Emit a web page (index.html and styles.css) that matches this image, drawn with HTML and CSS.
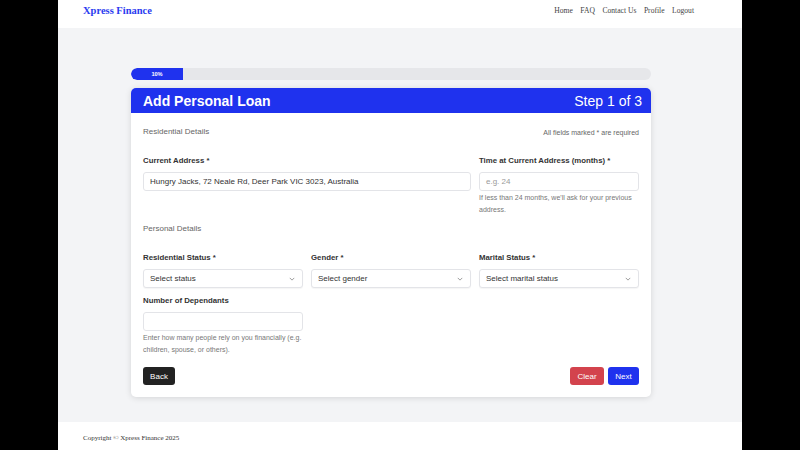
FILE: index.html
```html
<!DOCTYPE html>
<html lang="en">
<head>
<meta charset="utf-8">
<title>Add Personal Loan - Xpress Finance</title>
<link rel="stylesheet" href="styles.css">
</head>
<body>
<div class="page">
  <header class="topbar">
    <a class="brand" href="#">Xpress Finance</a>
    <nav class="nav">
      <a href="#">Home</a>
      <a href="#">FAQ</a>
      <a href="#">Contact Us</a>
      <a href="#">Profile</a>
      <a href="#">Logout</a>
    </nav>
  </header>

  <main class="main">
    <div class="wrap">
      <div class="progress"><div class="progress-fill" style="width:10%">10%</div></div>

      <section class="card">
        <div class="card-head">
          <h1>Add Personal Loan</h1>
          <span class="step">Step 1 of 3</span>
        </div>
        <div class="card-body">
          <div class="section-row">
            <span class="section-title">Residential Details</span>
            <span class="required-note">All fields marked * are required</span>
          </div>

          <div class="grid grid-first">
            <div class="field span2">
              <label>Current Address *</label>
              <div class="input">Hungry Jacks, 72 Neale Rd, Deer Park VIC 3023, Australia</div>
            </div>
            <div class="field">
              <label>Time at Current Address (months) *</label>
              <div class="input placeholder">e.g. 24</div>
              <p class="help">If less than 24 months, we'll ask for your previous address.</p>
            </div>
          </div>

          <div class="section-title section-second">Personal Details</div>

          <div class="grid grid-second">
            <div class="field">
              <label>Residential Status *</label>
              <div class="input select"><span>Select status</span><svg class="chev" viewBox="0 0 8 5" width="6" height="4"><path d="M1 1l3 3 3-3" fill="none" stroke="#888" stroke-width="1.1"/></svg></div>
            </div>
            <div class="field">
              <label>Gender *</label>
              <div class="input select"><span>Select gender</span><svg class="chev" viewBox="0 0 8 5" width="6" height="4"><path d="M1 1l3 3 3-3" fill="none" stroke="#888" stroke-width="1.1"/></svg></div>
            </div>
            <div class="field">
              <label>Marital Status *</label>
              <div class="input select"><span>Select marital status</span><svg class="chev" viewBox="0 0 8 5" width="6" height="4"><path d="M1 1l3 3 3-3" fill="none" stroke="#888" stroke-width="1.1"/></svg></div>
            </div>
            <div class="field">
              <label>Number of Dependants</label>
              <div class="input"></div>
              <p class="help help-tight">Enter how many people rely on you financially (e.g. children, spouse, or others).</p>
            </div>
          </div>

          <div class="actions">
            <button class="btn btn-dark">Back</button>
            <div class="actions-right">
              <button class="btn btn-red">Clear</button>
              <button class="btn btn-blue">Next</button>
            </div>
          </div>
        </div>
      </section>
    </div>
  </main>

  <footer class="footer">Copyright © Xpress Finance 2025</footer>
</div>
</body>
</html>
```

FILE: styles.css
```css
* { box-sizing: border-box; }
html, body { margin: 0; padding: 0; }
body {
  background: #000;
  font-family: "Liberation Sans", Arial, sans-serif;
}
.page {
  width: 684px;
  height: 450px;
  margin-left: 58px;
  display: flex;
  flex-direction: column;
  background: #f3f4f6;
}
.topbar {
  height: 28px;
  flex: none;
  background: #fff;
  display: flex;
  align-items: center;
  justify-content: space-between;
  padding: 0 48px 8px 25px;
}
.brand {
  font-family: "Liberation Serif", "Times New Roman", serif;
  font-weight: bold;
  font-size: 10.5px;
  color: #2a3cf0;
  text-decoration: none;
}
.nav { display: flex; gap: 7.5px; }
.nav a {
  font-family: "Liberation Serif", "Times New Roman", serif;
  font-size: 7.6px;
  color: #444;
  text-decoration: none;
}
.main { flex: 1; padding-top: 40px; }
.wrap { width: 520px; margin-left: 73px; }
.progress {
  height: 12px;
  border-radius: 6px;
  background: #e6e7ea;
  overflow: hidden;
  margin-bottom: 8px;
}
.progress-fill {
  height: 100%;
  background: #1f32ee;
  color: #fff;
  font-size: 5.6px;
  font-weight: bold;
  display: flex;
  align-items: center;
  justify-content: center;
  border-radius: 6px 0 0 6px;
}
.card {
  background: #fff;
  border-radius: 5px;
  box-shadow: 0 1px 6px rgba(0,0,0,0.13);
  overflow: hidden;
}
.card-head {
  height: 25px;
  background: #1f32ee;
  color: #fff;
  display: flex;
  align-items: center;
  justify-content: space-between;
  padding: 0 9px 0 12px;
}
.card-head h1 { margin: 0; font-size: 14px; font-weight: bold; }
.step { font-size: 14px; }
.card-body { padding: 13px 12px 12px; }
.section-row {
  display: flex;
  justify-content: space-between;
  align-items: center;
  height: 12px;
}
.section-title { font-size: 8px; color: #666; line-height: 12px; }
.required-note { font-size: 7px; color: #666; }
.grid {
  display: grid;
  grid-template-columns: repeat(3, 160px);
  column-gap: 8px;
}
.grid-first { margin-top: 18px; }
.grid-second { margin-top: 18px; row-gap: 8px; }
.section-second { margin-top: 7px; }
.span2 { grid-column: span 2; }
.field label {
  display: block;
  font-size: 7.8px;
  font-weight: bold;
  color: #333;
  line-height: 10px;
  margin-bottom: 6px;
}
.input {
  height: 19px;
  border: 1px solid #e3e4e8;
  border-radius: 3px;
  font-size: 8px;
  color: #333;
  display: flex;
  align-items: center;
  padding: 0 6px;
  background: #fff;
}
.placeholder { color: #9a9a9a; }
.select { justify-content: space-between; box-shadow: 0 1px 1px rgba(0,0,0,0.04); padding-right: 7px; }
.chev { display: block; }
.help {
  margin: 1px 0 0;
  font-size: 7px;
  line-height: 12px;
  color: #777;
}
.help-tight { line-height: 11.5px; margin-top: 1px; }
.actions {
  margin-top: 12px;
  display: flex;
  justify-content: space-between;
}
.actions-right { display: flex; gap: 4px; }
.btn {
  height: 18px;
  border: none;
  border-radius: 3px;
  color: #fff;
  font-family: "Liberation Sans", Arial, sans-serif;
  font-size: 8px;
  padding: 0;
}
.btn-dark { background: #222; width: 32px; }
.btn-red { background: #d3434d; width: 34px; }
.btn-blue { background: #1f32ee; width: 31px; }
.footer {
  height: 28px;
  flex: none;
  background: #fff;
  padding: 3px 25px 0;
  display: flex;
  align-items: center;
  font-family: "Liberation Serif", "Times New Roman", serif;
  font-size: 7px;
  color: #333;
}
```
